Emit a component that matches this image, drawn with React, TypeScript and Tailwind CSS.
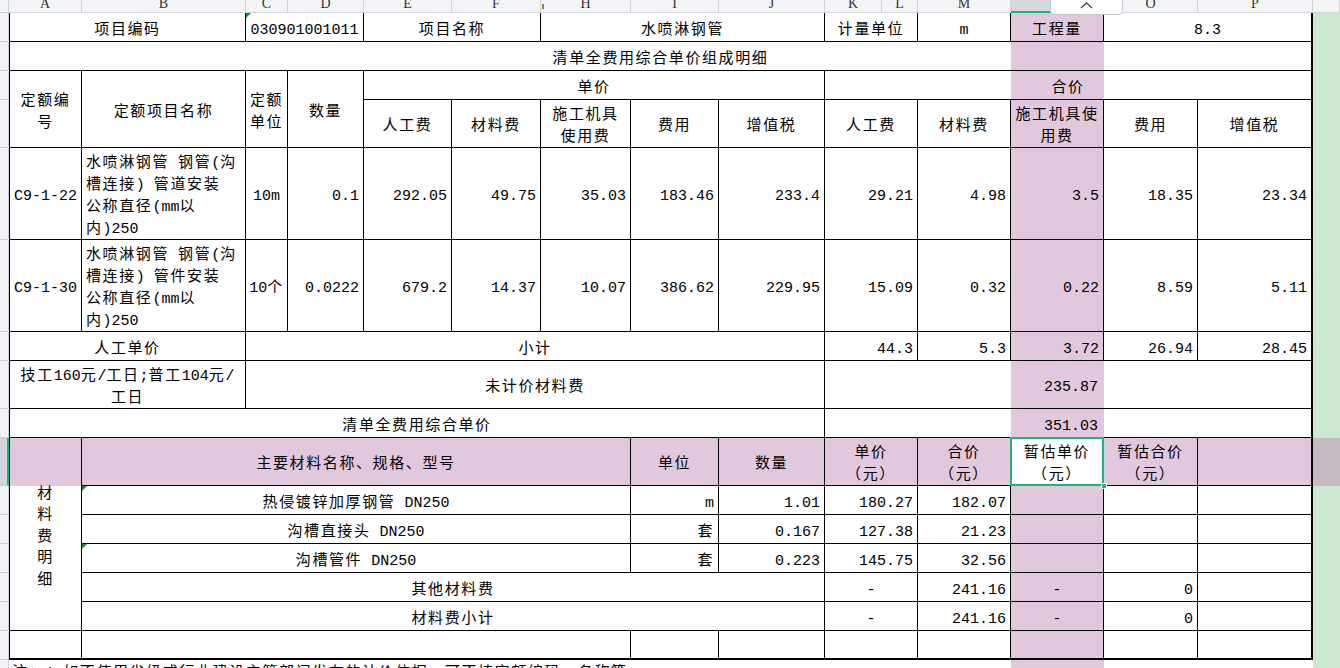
import React from 'react';

const CJK = /([\u2E80-\u9FFF\u3000-\u303F\uFF00-\uFFEF]+)/;

// CJK runs get a little tracking so they take the width of the sheet's font
function T({ s }: { s: string }) {
  return (
    <span>
      {s.split('\n').map((ln, i) => (
        <React.Fragment key={i}>
          {i > 0 && <br />}
          {ln.split(CJK).map((p, j) =>
            CJK.test(p) ? (
              <span key={j} className="tracking-[1.6px]">
                {p}
              </span>
            ) : (
              <React.Fragment key={j}>{p}</React.Fragment>
            )
          )}
        </React.Fragment>
      ))}
    </span>
  );
}

type Al = 'c' | 'r' | 'l';
const AL: Record<Al, string> = {
  c: 'justify-center text-center',
  r: 'justify-end text-right',
  l: 'justify-start text-left',
};

const R = 'border-r border-b';
const L = 'border-l border-r border-b';
const P = 'border-r-2 border-b';
const N = 'border-b';

// [grid area, text, align, borders, extra]
type Row = [string, string, Al?, string?, string?];

const cells: Row[] = [
  // row 1
  ['col-[2/4] row-[2/3]', '项目编码', 'c', L],
  ['col-[4/6] row-[2/3]', '030901001011', 'c', R, 'tri'],
  ['col-[6/8] row-[2/3]', '项目名称'],
  ['col-[8/11] row-[2/3]', '水喷淋钢管'],
  ['col-[11/13] row-[2/3]', '计量单位'],
  ['col-[13/14] row-[2/3]', 'm'],
  ['col-[14/15] row-[2/3]', '工程量'],
  ['col-[15/17] row-[2/3]', '8.3', 'c', P],
  // row 2
  ['col-[2/17] row-[3/4]', '清单全费用综合单价组成明细', 'c', 'border-l border-r-2 border-b'],
  // rows 3-4
  ['col-[2/3] row-[4/6]', '定额编\n号', 'c', L],
  ['col-[3/4] row-[4/6]', '定额项目名称'],
  ['col-[4/5] row-[4/6]', '定额\n单位'],
  ['col-[5/6] row-[4/6]', '数量'],
  ['col-[6/11] row-[4/5]', '单价'],
  ['col-[11/17] row-[4/5]', '合价', 'c', P],
  ['col-[6/7] row-[5/6]', '人工费'],
  ['col-[7/8] row-[5/6]', '材料费'],
  ['col-[8/9] row-[5/6]', '施工机具\n使用费'],
  ['col-[9/10] row-[5/6]', '费用'],
  ['col-[10/11] row-[5/6]', '增值税'],
  ['col-[11/13] row-[5/6]', '人工费'],
  ['col-[13/14] row-[5/6]', '材料费'],
  ['col-[14/15] row-[5/6]', '施工机具使\n用费'],
  ['col-[15/16] row-[5/6]', '费用'],
  ['col-[16/17] row-[5/6]', '增值税', 'c', P],
  // row 5
  ['col-[2/3] row-[6/7]', 'C9-1-22', 'c', L],
  ['col-[3/4] row-[6/7]', '水喷淋钢管 钢管(沟\n槽连接) 管道安装\n公称直径(mm以\n内)250', 'l'],
  ['col-[4/5] row-[6/7]', '10m'],
  ['col-[5/6] row-[6/7]', '0.1', 'r'],
  ['col-[6/7] row-[6/7]', '292.05', 'r'],
  ['col-[7/8] row-[6/7]', '49.75', 'r'],
  ['col-[8/9] row-[6/7]', '35.03', 'r'],
  ['col-[9/10] row-[6/7]', '183.46', 'r'],
  ['col-[10/11] row-[6/7]', '233.4', 'r'],
  ['col-[11/13] row-[6/7]', '29.21', 'r'],
  ['col-[13/14] row-[6/7]', '4.98', 'r'],
  ['col-[14/15] row-[6/7]', '3.5', 'r'],
  ['col-[15/16] row-[6/7]', '18.35', 'r'],
  ['col-[16/17] row-[6/7]', '23.34', 'r', P],
  // row 6
  ['col-[2/3] row-[7/8]', 'C9-1-30', 'c', L],
  ['col-[3/4] row-[7/8]', '水喷淋钢管 钢管(沟\n槽连接) 管件安装\n公称直径(mm以\n内)250', 'l'],
  ['col-[4/5] row-[7/8]', '10个'],
  ['col-[5/6] row-[7/8]', '0.0222', 'r'],
  ['col-[6/7] row-[7/8]', '679.2', 'r'],
  ['col-[7/8] row-[7/8]', '14.37', 'r'],
  ['col-[8/9] row-[7/8]', '10.07', 'r'],
  ['col-[9/10] row-[7/8]', '386.62', 'r'],
  ['col-[10/11] row-[7/8]', '229.95', 'r'],
  ['col-[11/13] row-[7/8]', '15.09', 'r'],
  ['col-[13/14] row-[7/8]', '0.32', 'r'],
  ['col-[14/15] row-[7/8]', '0.22', 'r'],
  ['col-[15/16] row-[7/8]', '8.59', 'r'],
  ['col-[16/17] row-[7/8]', '5.11', 'r', P],
  // row 7
  ['col-[2/4] row-[8/9]', '人工单价', 'c', L],
  ['col-[4/11] row-[8/9]', '小计'],
  ['col-[11/13] row-[8/9]', '44.3', 'r'],
  ['col-[13/14] row-[8/9]', '5.3', 'r'],
  ['col-[14/15] row-[8/9]', '3.72', 'r'],
  ['col-[15/16] row-[8/9]', '26.94', 'r'],
  ['col-[16/17] row-[8/9]', '28.45', 'r', P],
  // row 8
  ['col-[2/4] row-[9/10]', '技工160元/工日;普工104元/\n工日', 'c', L],
  ['col-[4/11] row-[9/10]', '未计价材料费'],
  ['col-[11/14] row-[9/10]', '', 'c', N],
  ['col-[14/15] row-[9/10]', '235.87', 'r', N, 'pr-[6px]'],
  ['col-[15/17] row-[9/10]', '', 'c', P],
  // row 9
  ['col-[2/11] row-[10/11]', '清单全费用综合单价', 'c', L],
  ['col-[11/14] row-[10/11]', '', 'c', N],
  ['col-[14/15] row-[10/11]', '351.03', 'r', N, 'pr-[6px]'],
  ['col-[15/17] row-[10/11]', '', 'c', P],
  // row 10
  ['col-[2/3] row-[11/17]', '材\n料\n费\n明\n细', 'c', L, 'leading-[21.5px]'],
  ['col-[3/9] row-[11/12]', '主要材料名称、规格、型号'],
  ['col-[9/10] row-[11/12]', '单位'],
  ['col-[10/11] row-[11/12]', '数量'],
  ['col-[11/13] row-[11/12]', '单价\n（元）'],
  ['col-[13/14] row-[11/12]', '合价\n（元）'],
  ['col-[15/16] row-[11/12]', '暂估合价\n（元）'],
  ['col-[16/17] row-[11/12]', '', 'c', P],
  // rows 11-13
  ['col-[3/9] row-[12/13]', '热侵镀锌加厚钢管 DN250', 'c', R, 'tri'],
  ['col-[9/10] row-[12/13]', 'm', 'r'],
  ['col-[10/11] row-[12/13]', '1.01', 'r'],
  ['col-[11/13] row-[12/13]', '180.27', 'r'],
  ['col-[13/14] row-[12/13]', '182.07', 'r'],
  ['col-[14/15] row-[12/13]', ''],
  ['col-[15/16] row-[12/13]', ''],
  ['col-[16/17] row-[12/13]', '', 'c', P],
  ['col-[3/9] row-[13/14]', '沟槽直接头 DN250'],
  ['col-[9/10] row-[13/14]', '套', 'r'],
  ['col-[10/11] row-[13/14]', '0.167', 'r'],
  ['col-[11/13] row-[13/14]', '127.38', 'r'],
  ['col-[13/14] row-[13/14]', '21.23', 'r'],
  ['col-[14/15] row-[13/14]', ''],
  ['col-[15/16] row-[13/14]', ''],
  ['col-[16/17] row-[13/14]', '', 'c', P],
  ['col-[3/9] row-[14/15]', '沟槽管件 DN250', 'c', R, 'tri'],
  ['col-[9/10] row-[14/15]', '套', 'r'],
  ['col-[10/11] row-[14/15]', '0.223', 'r'],
  ['col-[11/13] row-[14/15]', '145.75', 'r'],
  ['col-[13/14] row-[14/15]', '32.56', 'r'],
  ['col-[14/15] row-[14/15]', ''],
  ['col-[15/16] row-[14/15]', ''],
  ['col-[16/17] row-[14/15]', '', 'c', P],
  // rows 14-15
  ['col-[3/11] row-[15/16]', '其他材料费'],
  ['col-[11/13] row-[15/16]', '-'],
  ['col-[13/14] row-[15/16]', '241.16', 'r'],
  ['col-[14/15] row-[15/16]', '-'],
  ['col-[15/16] row-[15/16]', '0', 'r'],
  ['col-[16/17] row-[15/16]', '', 'c', P],
  ['col-[3/11] row-[16/17]', '材料费小计'],
  ['col-[11/13] row-[16/17]', '-'],
  ['col-[13/14] row-[16/17]', '241.16', 'r'],
  ['col-[14/15] row-[16/17]', '-'],
  ['col-[15/16] row-[16/17]', '0', 'r'],
  ['col-[16/17] row-[16/17]', '', 'c', P],
  // row 16, closes the table
  ['col-[2/3] row-[17/18]', '', 'c', 'border-l border-r border-b-2'],
  ['col-[3/9] row-[17/18]', '', 'c', 'border-r border-b-2'],
  ['col-[9/10] row-[17/18]', '', 'c', 'border-r border-b-2'],
  ['col-[10/11] row-[17/18]', '', 'c', 'border-r border-b-2'],
  ['col-[11/13] row-[17/18]', '', 'c', 'border-r border-b-2'],
  ['col-[13/14] row-[17/18]', '', 'c', 'border-r border-b-2'],
  ['col-[14/15] row-[17/18]', '', 'c', 'border-r border-b-2'],
  ['col-[15/16] row-[17/18]', '', 'c', 'border-r border-b-2'],
  ['col-[16/17] row-[17/18]', '', 'c', 'border-r-2 border-b-2'],
];

const letters: [string, string][] = [
  ['A', 'col-[2/3]'],
  ['B', 'col-[3/4]'],
  ['C', 'col-[4/5]'],
  ['D', 'col-[5/6]'],
  ['E', 'col-[6/7]'],
  ['F', 'col-[7/8]'],
  ['H', 'col-[8/9]'],
  ['I', 'col-[9/10]'],
  ['J', 'col-[10/11]'],
  ['K', 'col-[11/12]'],
  ['L', 'col-[12/13]'],
  ['M', 'col-[13/14]'],
  ['O', 'col-[15/16]'],
  ['P', 'col-[16/17]'],
  ['', 'col-[17/18]'],
];

const stripRows = [
  'row-[2/3]', 'row-[3/4]', 'row-[4/5]', 'row-[5/6]', 'row-[6/7]', 'row-[7/8]',
  'row-[8/9]', 'row-[9/10]', 'row-[10/11]', 'row-[12/13]', 'row-[13/14]',
  'row-[14/15]', 'row-[15/16]', 'row-[16/17]', 'row-[17/18]', 'row-[18/19]',
];

function Cell({ r }: { r: Row }) {
  const [at, s, a = 'c', b = R, x = ''] = r;
  const tri = x === 'tri';
  const lh = x.includes('leading') ? '' : 'leading-[22px]';
  return (
    <div
      className={`${at} ${b} border-black relative flex items-center px-1 pt-[7px] whitespace-nowrap ${lh} ${AL[a]} ${tri ? '' : x}`}
    >
      {tri && (
        <div className="absolute left-0 top-0 w-0 h-0 border-t-[5px] border-r-[5px] border-t-[#1b8a3a] border-r-transparent" />
      )}
      {s && <T s={s} />}
    </div>
  );
}

export default function App() {
  return (
    <div className="w-[1340px] h-[668px] overflow-hidden bg-white text-[15px] text-black font-[family-name:'Liberation_Mono','Noto_Sans_CJK_SC',monospace]">
      <div className="grid grid-cols-[9px_73px_164px_42px_76px_88px_89px_90px_88px_106px_57px_36px_93px_93px_94px_115px_27px] grid-rows-[13px_29px_29px_29px_48px_92px_92px_29px_48px_29px_48px_29px_29px_29px_29px_29px_29px_30px]">
        {/* reading-mode highlight of column N and row 10 */}
        <div className="col-[14/15] row-[2/19] bg-[#e2c8dc]" />
        <div className="col-[2/17] row-[11/12] bg-[#e2c8dc]" />
        <div className="col-[17/18] row-[2/19] bg-[#cde8d1]" />
        <div className="col-[17/18] row-[11/12] bg-[#c6bbc3]" />

        {/* column header */}
        <div className="col-[1/2] row-[1/2] bg-[#f1f2f5] border-r border-b border-[#cdd0d6]" />
        {letters.map(([l, c]) => (
          <div
            key={c}
            className={`${c} row-[1/2] relative flex items-start justify-center bg-[#f3f4f6] border-r border-b border-[#d2d5da] overflow-hidden font-['Liberation_Serif',serif] text-[14px] text-[#333]`}
          >
            {c === 'col-[8/9]' && <div className="absolute left-[1px] top-[4px] w-[2px] h-[5px] bg-[#9a7b4f]" />}
            <span className="leading-[14px] mt-[-3px]">{l}</span>
          </div>
        ))}
        <div className="col-[14/15] row-[1/2] relative bg-[#d5d8de] border-r border-[#d2d5da] border-b-2 border-b-[#22b378] flex items-start justify-center font-['Liberation_Serif',serif] text-[14px] text-[#333]">
          <span className="leading-[14px] mt-[-3px]">N</span>
          <div className="absolute left-[39px] top-[-1px] w-[73px] h-[16px] z-10 bg-white border border-[#c4c7cc] rounded-b-[4px] flex items-start justify-center pt-[2px]">
            <svg width="13" height="7" viewBox="0 0 13 7">
              <path d="M1 6 L6.5 1 L12 6" stroke="#4a4a4a" strokeWidth="1.3" fill="none" />
            </svg>
          </div>
        </div>

        {/* row header strip */}
        {stripRows.map((r) => (
          <div key={r} className={`col-[1/2] ${r} bg-[#f1f2f5] border-r border-b border-[#cdd0d6]`} />
        ))}
        <div className="col-[1/2] row-[11/12] bg-[#d2d5dc] border-b border-[#cdd0d6] border-r-2 border-r-[#22b378]" />

        {cells.map((r) => (
          <Cell key={r[0]} r={r} />
        ))}

        {/* selected cell N10 */}
        <div className="col-[14/15] row-[11/12] relative border-r border-b border-black bg-white flex items-center justify-center text-center pt-[7px] leading-[22px] whitespace-nowrap">
          <T s={'暂估单价\n（元）'} />
          <div className="absolute left-[-1px] top-[-1px] right-[-1px] bottom-[-1px] border-2 border-[#22b378]" />
          <div className="absolute right-[-4px] bottom-[-4px] w-[6px] h-[6px] bg-[#22b378] border border-white" />
        </div>

        <div className="col-[2/17] row-[18/19] flex items-start pl-[3px] pt-[3px] leading-[22px] whitespace-nowrap">
          <T s="注：1.如不使用省级或行业建设主管部门发布的计价依据，可不填定额编码、名称等。" />
        </div>
      </div>
    </div>
  );
}
